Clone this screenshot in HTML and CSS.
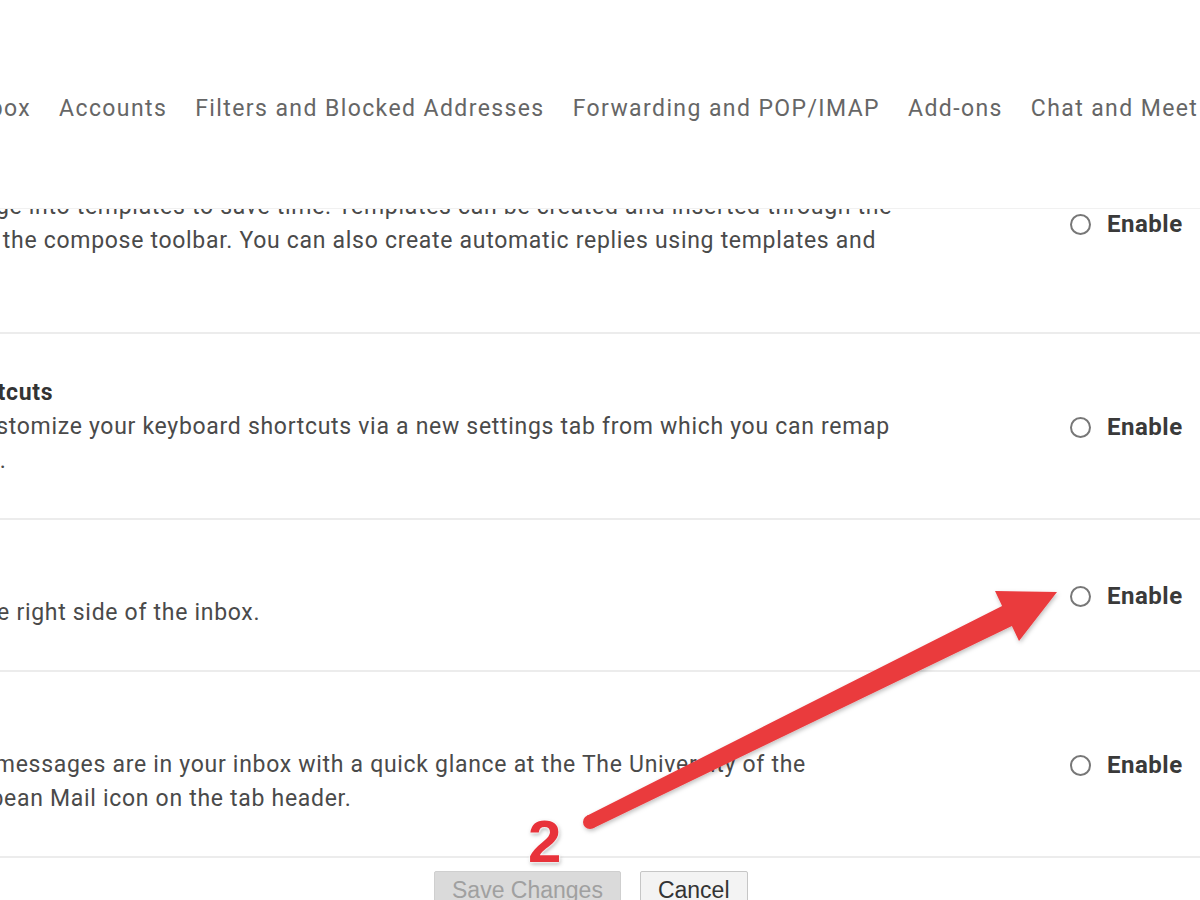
FILE: index.html
```html
<!DOCTYPE html>
<html lang="en">
<head>
    <meta charset="UTF-8">
    <title>Settings - Advanced</title>
    <link rel="stylesheet" href="styles.css">
</head>
<body>
    <div class="settings">
        <nav class="tabs">
            <a>General</a>
            <a>Labels</a>
            <a>Inbox</a>
            <a>Accounts</a>
            <a>Filters and Blocked Addresses</a>
            <a>Forwarding and POP/IMAP</a>
            <a>Add-ons</a>
            <a>Chat and Meet</a>
            <a>Advanced</a>
        </nav>

        <div class="scroll">
            <div class="scroll-inner">
                <div class="row">
                    <div class="info">
                        <div class="title">Templates</div>
                        <div class="desc">Save your most message into templates to save time. Templates can be created and inserted through the<br>'More options' menu in the compose toolbar. You can also create automatic replies using templates and<br>filters together.</div>
                    </div>
                    <label class="enable"><span class="radio"></span>Enable</label>
                </div>
                <div class="row">
                    <div class="info">
                        <div class="title">Custom keyboard shortcuts</div>
                        <div class="desc">This option lets you customize your keyboard shortcuts via a new settings tab from which you can remap<br>keys to various actions.</div>
                    </div>
                    <label class="enable"><span class="radio"></span>Enable</label>
                </div>
                <div class="row">
                    <div class="info">
                        <div class="title">Right-side chat</div>
                        <div class="desc">Moves a chat box to the right side of the inbox.</div>
                    </div>
                    <label class="enable"><span class="radio"></span>Enable</label>
                </div>
                <div class="row">
                    <div class="info">
                        <div class="title">Unread message icon</div>
                        <div class="desc">See how many unread messages are in your inbox with a quick glance at the The University of the<br>West Indies UWI Caribbean Mail icon on the tab header.</div>
                    </div>
                    <label class="enable"><span class="radio"></span>Enable</label>
                </div>

                <div class="actions">
                    <button class="btn btn-save" disabled>Save Changes</button>
                    <button class="btn">Cancel</button>
                </div>
            </div>
        </div>
    </div>

    <!-- annotation drawn on top of the screenshot -->
    <div class="step">2</div>
    <svg class="arrow" width="1200" height="900" viewBox="0 0 1200 900">
        <defs>
            <filter id="shadow" x="-10%" y="-10%" width="120%" height="130%">
                <feDropShadow dx="1" dy="2" stdDeviation="2" flood-color="#000" flood-opacity="0.25"/>
            </filter>
        </defs>
        <g fill="#ea3a3e" filter="url(#shadow)">
            <circle cx="590" cy="822" r="7"/>
            <polygon points="586.9,815.7 1002.1,606.1 995,591 1057,592 1019,641 1011.9,625.9 593.1,828.3"/>
        </g>
    </svg>
</body>
</html>
```

FILE: styles.css
```css
body {
    margin: 0;
    width: 1200px;
    height: 900px;
    overflow: hidden;
    position: relative;
    background: #fff;
    font-family: Roboto, 'Noto Sans', Arial, sans-serif;
}
.settings {
    margin-left: -250px;
    width: 1480px;
}
.tabs {
    display: flex;
    gap: 28px;
    margin-left: -2px;
    padding-top: 92px;
    height: 34px;
    line-height: 34px;
    font-size: 23px;
    letter-spacing: 1.4px;
    color: #666;
    white-space: nowrap;
}
.scroll {
    margin-top: 82px;
    height: 692px;
    overflow: hidden;
    border-top: 1px solid #f1f1f1;
}
.scroll-inner {
    margin-top: -95px;
}
.row {
    display: grid;
    grid-template-columns: 1320px auto;
    align-items: center;
    padding: 42px 0 40px;
    border-bottom: 2px solid #ececec;
}
.row:last-of-type {
    border-bottom: none;
}
.info {
    font-size: 23px;
    line-height: 34px;
    letter-spacing: 0.7px;
    white-space: nowrap;
}
.title {
    font-weight: bold;
    color: #333;
}
.desc {
    color: #4a4a4a;
}
.enable {
    display: flex;
    align-items: center;
    gap: 16px;
    font-size: 24px;
    letter-spacing: 0.5px;
    font-weight: bold;
    color: #3a3a3a;
}
.radio {
    width: 17px;
    height: 17px;
    border: 2px solid #777;
    border-radius: 50%;
}
.actions {
    display: flex;
    gap: 19px;
    margin: 13px 0 0 684px;
}
.btn {
    height: 38px;
    padding: 0 17px;
    font-family: 'Liberation Sans', Arial, sans-serif;
    font-size: 23px;
    color: #333;
    background: #f3f3f3;
    border: 1px solid #c6c6c6;
    border-radius: 2px;
}
.btn-save {
    color: #a0a0a0;
    background: #dadada;
    border-color: #cfcfcf;
}
.step {
    position: absolute;
    left: 528px;
    top: 812px;
    font-family: 'Liberation Sans', Arial, sans-serif;
    font-size: 60px;
    font-weight: bold;
    line-height: 60px;
    color: #e8323a;
    text-shadow: 0 0 2px #fff, 0 0 3px #fff, 0 0 3px #fff, 1px 2px 4px rgba(0, 0, 0, 0.35);
}
.arrow {
    position: absolute;
    left: 0;
    top: 0;
    pointer-events: none;
}
```
